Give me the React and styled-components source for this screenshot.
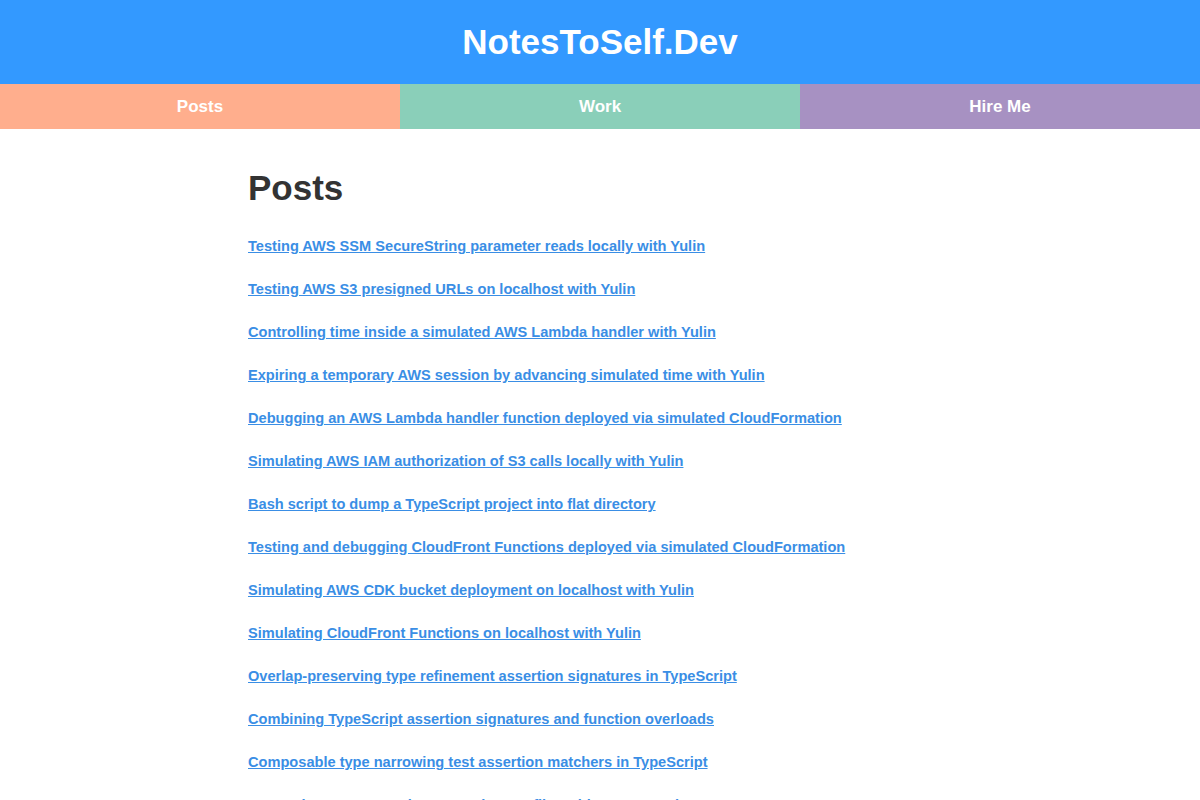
import React from "react";
import styled, { createGlobalStyle } from "styled-components";

const GlobalStyle = createGlobalStyle`
  html, body {
    margin: 0;
    padding: 0;
    background: #ffffff;
    font-family: "Liberation Sans", Arial, sans-serif;
  }
`;

const Header = styled.header`
  background: #3399ff;
  height: 84px;
  display: flex;
  align-items: center;
  justify-content: center;
`;

const SiteTitle = styled.h1`
  margin: 0;
  color: #ffffff;
  font-size: 35px;
  font-weight: 700;
`;

const Nav = styled.nav`
  display: grid;
  grid-template-columns: repeat(3, 1fr);
`;

const NavItem = styled.a`
  height: 45px;
  display: flex;
  align-items: center;
  justify-content: center;
  background: ${(p) => p.$bg};
  color: #ffffff;
  font-size: 17px;
  font-weight: 700;
  text-decoration: none;
`;

const Main = styled.main`
  width: 704px;
  margin: 0 auto;
  padding-top: 38px;
`;

const PageTitle = styled.h2`
  margin: 0 0 28px;
  color: #333333;
  font-size: 35px;
  font-weight: 700;
  line-height: 42px;
`;

const PostList = styled.ul`
  list-style: none;
  margin: 0;
  padding: 0;
  display: flex;
  flex-direction: column;
  gap: 26px;
`;

const PostItem = styled.li`
  line-height: 17px;
  height: 17px;
`;

const PostLink = styled.a`
  color: #3a8ee5;
  font-size: 14.6px;
  font-weight: 700;
  line-height: 17px;
  text-decoration: underline;
`;

const navItems = [
  { label: "Posts", bg: "#ffae8d" },
  { label: "Work", bg: "#8acfb9" },
  { label: "Hire Me", bg: "#a791c2" },
];

const posts = [
  "Testing AWS SSM SecureString parameter reads locally with Yulin",
  "Testing AWS S3 presigned URLs on localhost with Yulin",
  "Controlling time inside a simulated AWS Lambda handler with Yulin",
  "Expiring a temporary AWS session by advancing simulated time with Yulin",
  "Debugging an AWS Lambda handler function deployed via simulated CloudFormation",
  "Simulating AWS IAM authorization of S3 calls locally with Yulin",
  "Bash script to dump a TypeScript project into flat directory",
  "Testing and debugging CloudFront Functions deployed via simulated CloudFormation",
  "Simulating AWS CDK bucket deployment on localhost with Yulin",
  "Simulating CloudFront Functions on localhost with Yulin",
  "Overlap-preserving type refinement assertion signatures in TypeScript",
  "Combining TypeScript assertion signatures and function overloads",
  "Composable type narrowing test assertion matchers in TypeScript",
  "Preventing type errors in TypeScript test files with tsc --noEmit",
];

export default function App() {
  return (
    <>
      <GlobalStyle />
      <Header>
        <SiteTitle>NotesToSelf.Dev</SiteTitle>
      </Header>
      <Nav>
        {navItems.map((n) => (
          <NavItem key={n.label} href="#" $bg={n.bg}>
            {n.label}
          </NavItem>
        ))}
      </Nav>
      <Main>
        <PageTitle>Posts</PageTitle>
        <PostList>
          {posts.map((t) => (
            <PostItem key={t}>
              <PostLink href="#">{t}</PostLink>
            </PostItem>
          ))}
        </PostList>
      </Main>
    </>
  );
}
